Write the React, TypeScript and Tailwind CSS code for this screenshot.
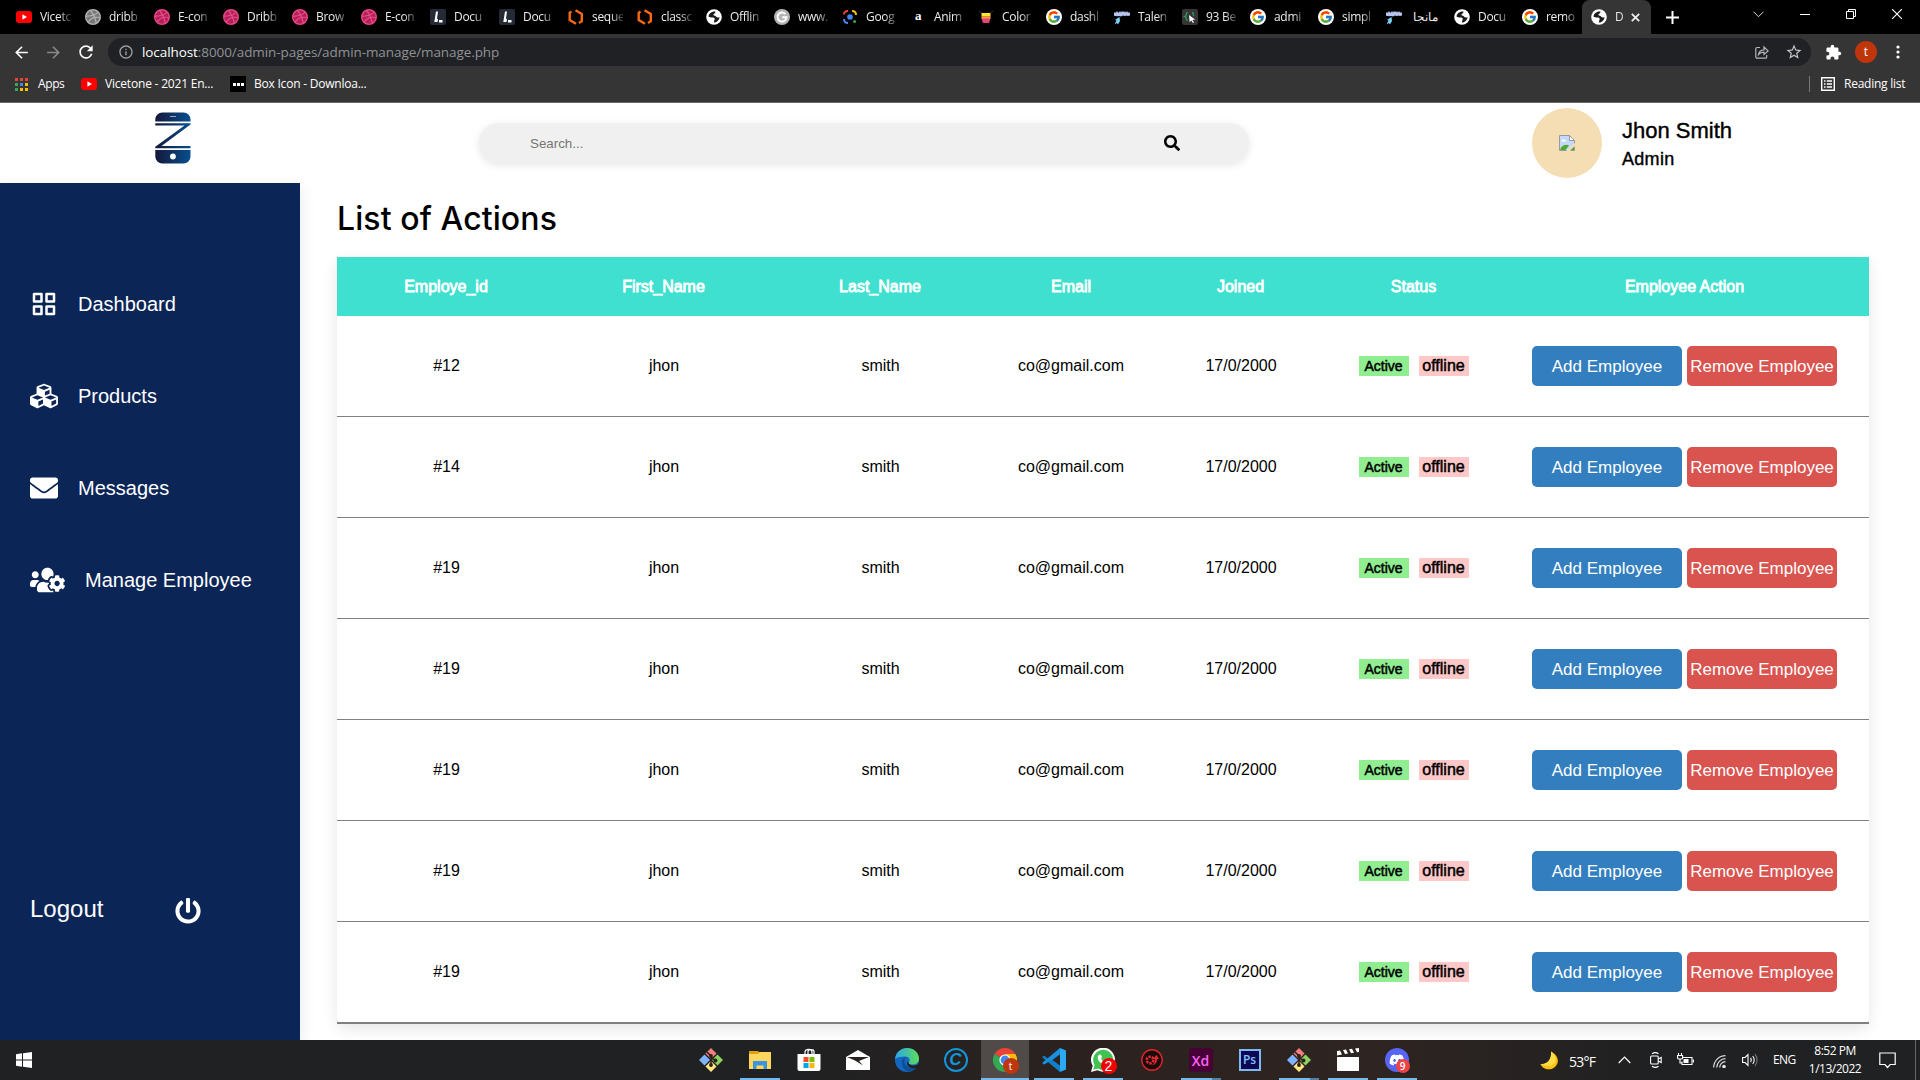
import React from "react";
import { FaCubes, FaEnvelope, FaUsersCog, FaPowerOff, FaSearch, FaDribbble, FaDiscord } from "react-icons/fa";
import { FcGoogle } from "react-icons/fc";
import { BiGridAlt } from "react-icons/bi";
import { MdArrowBack, MdArrowForward, MdRefresh, MdExtension, MdStarBorder, MdOutlineInfo } from "react-icons/md";

const UI = "font-['Open_Sans',sans-serif]";

function YouTube() {
  return (
    <svg width="16" height="16" viewBox="0 0 16 16" className="shrink-0">
      <rect y="2" width="16" height="12" rx="3" fill="#f00" />
      <path d="M6.4 5.3 11 8l-4.6 2.7z" fill="#fff" />
    </svg>
  );
}
function Dribbble({ gray }: { gray?: boolean }) {
  return (
    <span className={`flex size-4 shrink-0 items-center justify-center rounded-full ${gray ? "bg-[#777]" : "bg-[#b2215a]"}`}>
      <FaDribbble size={16} color={gray ? "#b5b5b5" : "#ea4c89"} />
    </span>
  );
}
function Lib() {
  return (
    <svg width="16" height="16" viewBox="0 0 16 16" className="shrink-0">
      <rect width="16" height="16" rx="2" fill="#252b36" />
      <path d="M6 2.500h2L7 9.500l1 1-.5 2.500H4.300zM9 11h3.500v2.500H9z" fill="#fff" />
    </svg>
  );
}
function Hex() {
  return (
    <svg width="16" height="16" viewBox="0 0 16 16" fill="none" stroke="#f9690e" strokeWidth="2.4" className="shrink-0">
      <path d="M3.500 2.500 1.700 3.800V11L8 14.800M7.500 1.200l6.300 3.800v7.200L11 14" />
    </svg>
  );
}
function Globe() {
  return (
    <svg width="16" height="16" viewBox="0 0 16 16" className="shrink-0">
      <circle cx="8" cy="8" r="7.800" fill="#fff" />
      <path d="M9.500 2.500C5.500 2 3 4.500 2.500 7.500c1.500 1.200 3 1 4.500 1 1.500.2 2 1.200 1.500 2.300L7.800 13.500c3 .2 5.700-2.500 5.700-5.500-1 .8-2.500.7-3.300-.3C9.500 6.500 8 7 7.500 6c-.4-1.200 2-1.200 2-3.500z" fill="#1c1c1c" />
      <path d="M3.500 9.500c0 2 1.500 3.300 2.500 3.700l.3-2z" fill="#fff" />
    </svg>
  );
}
function Google() {
  return (
    <span className="flex size-4 shrink-0 items-center justify-center rounded-full bg-white">
      <FcGoogle size={14} />
    </span>
  );
}
function GrayG() {
  return (
    <svg width="16" height="16" viewBox="0 0 16 16" className="shrink-0">
      <circle cx="8" cy="8" r="8" fill="#b3b3b3" />
      <path d="M11.300 5A4.500 4.500 0 1 0 12.500 8.300H8.300" fill="none" stroke="#fff" strokeWidth="2" />
    </svg>
  );
}
function Lens() {
  return (
    <svg width="16" height="16" viewBox="0 0 16 16" fill="none" strokeWidth="2" className="shrink-0">
      <path d="M2 5.500C2 3 3 2 6 2" stroke="#ea4335" />
      <path d="M10 2c3 0 4 1 4 4" stroke="#fbbc04" />
      <path d="M2 10c0 3 1 4 4 4" stroke="#4285f4" />
      <circle cx="8" cy="8" r="2.800" fill="#4285f4" />
      <circle cx="12.600" cy="12.600" r="1.500" fill="#34a853" />
    </svg>
  );
}
function LetterA() {
  return <span className="flex size-4 shrink-0 items-center justify-center pb-[3px] font-['Liberation_Serif',serif] text-[13px] leading-none font-bold text-white">a</span>;
}
function Shield() {
  return (
    <svg width="16" height="16" viewBox="0 0 16 16" className="shrink-0">
      <path d="M1 2l3 2M15 2l-3 2" stroke="#333" />
      <path d="M3.500 4h9v3.500h-9z" fill="#ffe52e" />
      <path d="M3.500 7.300h9V10h-9z" fill="#ff9c3b" />
      <path d="M3.500 9.500h9L11 14H5z" fill="#e0457b" />
    </svg>
  );
}
function Rocket() {
  return (
    <svg width="16" height="16" viewBox="0 0 16 16" className="shrink-0">
      <path d="M0 3.500h2l1-1.500 1 1.500h1L6 2l1 1.500L8 2l1 1 1.500-1v1.500L12 2.500l1 1 1-1.500v1.500h2v3l-2 .5-2-.5-1 .8-2-.8-2 1-2-.6-2 .4-3-.5z" fill="#b9c4ee" />
      <path d="M5.500 8 3 9.500 1 11l1.500.5-2 4 2.500-1.500 1 1.500L6 12z" fill="#7cd0f2" />
    </svg>
  );
}
function Braces() {
  return (
    <svg width="16" height="16" viewBox="0 0 16 16" className="shrink-0">
      <rect width="16" height="16" rx="2" fill="#363636" />
      <path d="M5.500 3.500c-2 0-.5 3.500-2.300 4 1.800.5.300 4 2.300 4M10 3.500c2 0 .8 2.500 1.800 3.500" stroke="#2f9e5b" strokeWidth="1.300" fill="none" />
      <path d="m7 6 6 4.500-2.500.4L12 13.500l-1.200.6-1.300-2.700L7.600 13z" fill="#fff" />
    </svg>
  );
}

const tabs: [React.ReactNode, string][] = [
  [<YouTube />, "Vicetc"], [<Dribbble gray />, "dribb"], [<Dribbble />, "E-con"], [<Dribbble />, "Dribb"],
  [<Dribbble />, "Brow"], [<Dribbble />, "E-con"], [<Lib />, "Docu"], [<Lib />, "Docu"],
  [<Hex />, "seque"], [<Hex />, "classc"], [<Globe />, "Offlin"], [<GrayG />, "www."],
  [<Lens />, "Goog"], [<LetterA />, "Anim"], [<Shield />, "Color"], [<Google />, "dashl"],
  [<Rocket />, "Talen"], [<Braces />, "93 Be"], [<Google />, "admi"], [<Google />, "simpl"],
  [<Rocket />, "مانجا"], [<Globe />, "Docu"], [<Google />, "remo"],
];

function TabStrip() {
  return (
    <div className={`flex h-[34px] items-stretch bg-black pl-[9px] text-[12px] tracking-[-0.3px] text-[#ececec] ${UI}`}>
      {tabs.map(([icon, label], i) => (
        <div key={i} className={`flex items-center gap-2 pl-[7px] ${i < 10 ? "w-[69px]" : i === 22 ? "w-[67px]" : "w-[68px]"} shrink-0`}>
          {icon}
          {i === 20 ? (
            <span className="w-[30px] shrink-0 pr-[2px] text-right text-[12px] tracking-normal whitespace-nowrap">{label}</span>
          ) : (
            <span className="w-[31px] shrink-0 [mask-image:linear-gradient(90deg,#000_60%,#0003)] whitespace-nowrap">{label}</span>
          )}
          <span className={`ml-auto h-5 w-px ${i < 22 ? "bg-[#5a5a5a]" : ""}`} />
        </div>
      ))}
      <div className="flex w-[69px] shrink-0 items-center rounded-t-[8px] bg-[#353535] pl-[9px]">
        <Globe />
        <span className="ml-2 w-4 [mask-image:linear-gradient(90deg,#000_20%,#0008)]">D</span>
        <svg width="9" height="9" viewBox="0 0 9 9" stroke="#eee" strokeWidth="1.800"><path d="M.8.8l7.400 7.400M8.200.8.8 8.200" /></svg>
      </div>
      <svg width="13" height="13" viewBox="0 0 13 13" stroke="#fff" strokeWidth="2" className="ml-[15px] self-center"><path d="M6.500 0v13M0 6.500h13" /></svg>
      <div className="ml-auto flex h-7 items-center pr-[18px]">
        <svg width="11" height="7" viewBox="0 0 11 7" fill="none" stroke="#ddd" className="mr-[36px]"><path d="M.5.7l5 5 5-5" /></svg>
        <svg width="10" height="10" viewBox="0 0 10 10" stroke="#fff" className="mr-[36px]"><path d="M0 5.500h10" /></svg>
        <svg width="10" height="10" viewBox="0 0 10 10" fill="none" stroke="#fff" className="mr-[36px]"><path d="M.5 2.500h7v7h-7zM2.500 2.500v-2h7v7h-2" /></svg>
        <svg width="10" height="10" viewBox="0 0 10 10" stroke="#fff" strokeWidth="1.100"><path d="M0 0l10 10M10 0 0 10" /></svg>
      </div>
    </div>
  );
}

function Toolbar() {
  return (
    <div className={`flex h-9 items-center bg-[#353535] pl-[12px] ${UI}`}>
      <MdArrowBack size={19} color="#fff" />
      <MdArrowForward size={19} color="#8a8a8a" className="ml-[13px]" />
      <MdRefresh size={20} color="#fff" className="ml-[13px]" />
      <div className="ml-[12px] flex h-7 w-[1703px] items-center rounded-full bg-[#202124] pr-[8px] pl-[10px]">
        <MdOutlineInfo size={16} color="#9aa0a6" />
        <span className="ml-2 text-[13.500px] tracking-[-0.08px] text-[#8f9296]">
          <span className="text-white">localhost</span>:8000/admin-pages/admin-manage/manage.php
        </span>
        <svg width="14" height="14" viewBox="0 0 14 14" fill="none" stroke="#b5b5b5" strokeWidth="1.200" className="mr-[16px] ml-auto">
          <path d="M5 2.500H2a1.200 1.200 0 0 0-1.200 1.200V12A1.200 1.200 0 0 0 2 13.200h8.500a1.200 1.200 0 0 0 1.200-1.200v-2" />
          <path d="M3.500 9.500C4 6.500 6 5 9 4.800V2l4.200 4L9 9.500V7.200C6.500 7.200 5 7.800 3.500 9.500z" />
        </svg>
        <MdStarBorder size={18} color="#c4c4c4" />
      </div>
      <MdExtension size={17} color="#fff" className="ml-[14px]" />
      <span className="ml-[13px] flex size-[22px] items-center justify-center rounded-full bg-[#bf360c] text-[12px] text-white">t</span>
      <svg width="4" height="14" viewBox="0 0 4 14" fill="#fff" className="ml-[19px]"><circle cx="2" cy="2" r="1.600" /><circle cx="2" cy="7" r="1.600" /><circle cx="2" cy="12" r="1.600" /></svg>
    </div>
  );
}

const appColors = ["#ea4335", "#ea4335", "#ea4335", "#34a853", "#4285f4", "#fbbc04", "#34a853", "#fbbc04", "#fbbc04"];

function Bookmarks() {
  return (
    <div className={`flex h-[33px] items-center border-b border-[#6a6a6a] bg-[#353535] pb-[4px] pl-[15px] text-[12px] text-white ${UI}`}>
      <span className="grid grid-cols-3 gap-[2px]">
        {appColors.map((c, i) => <span key={i} className="h-[3px] w-[3px]" style={{ background: c }} />)}
      </span>
      <span className="ml-[10px] w-[28px] tracking-[-0.4px]">Apps</span>
      <span className="ml-[15px]"><YouTube /></span>
      <span className="ml-2 w-[117px] tracking-[-0.2px] whitespace-nowrap">Vicetone - 2021 En...</span>
      <span className="ml-[8px] flex size-4 items-center justify-center gap-[1px] bg-black">
        <i className="size-[3px] bg-white" /><i className="size-[3px] bg-white" /><i className="size-[3px] bg-white" />
      </span>
      <span className="ml-2 tracking-[-0.22px]">Box Icon - Downloa...</span>
      <span className="ml-auto h-4 w-px bg-[#777]" />
      <svg width="14" height="14" viewBox="0 0 14 14" fill="none" stroke="#fff" strokeWidth="1.400" className="ml-[11px]">
        <path d="M.7.7h12.600v12.600H.7zM3 4h1.500M5.800 4H11M3 7h1.500M5.800 7H11M3 10h1.500M5.800 10H11" />
      </svg>
      <span className="mr-[14px] ml-[9px] w-[62px] tracking-[-0.25px] whitespace-nowrap">Reading list</span>
    </div>
  );
}

function Logo() {
  return (
    <svg width="36" height="52" viewBox="0 0 36 52" className="ml-[155px] shrink-0">
      <defs>
        <linearGradient id="logo" gradientUnits="userSpaceOnUse" x1="0" x2="36" y1="0" y2="0"><stop offset="0" stopColor="#15173a" /><stop offset="1" stopColor="#07508f" /></linearGradient>
      </defs>
      <path d="M.3 9.500V7.500A7 7 0 0 1 7.300.5h21.200a7 7 0 0 1 7 7v2z" fill="url(#logo)" />
      <path d="M.3 11.200h35.200v1.400L6.500 34h29v2.300H.3v-1.600L29.500 13.600H.3z" fill="url(#logo)" />
      <path d="M.3 38h35.200v6.500a7 7 0 0 1-7 7H7.300a7 7 0 0 1-7-7z" fill="url(#logo)" />
      <path d="M15 4.500h6" stroke="#8fa6c8" />
      <circle cx="17.900" cy="44.500" r="2.900" fill="#fff" />
    </svg>
  );
}

function BrokenImage() {
  return (
    <svg width="16" height="16" viewBox="0 0 16 16">
      <path d="M.5.5h10l5 5v10H.5z" fill="#c3d9f7" stroke="#9a9a9a" />
      <path d="M10.500.5v5h5z" fill="#fff" stroke="#9a9a9a" />
      <path d="M2.500 6c.3-2 3-2.200 3.500-.8 1.500-.2 1.800.8 1.700 1.300H2.500z" fill="#fff" />
      <path d="M1 15c1.500-5 6-6 9-4.500L6.500 15z" fill="#4ea832" />
      <path d="M7 16l9-8v3l-5 5z" fill="#f5deb3" />
      <path d="M11.500 15 15 12v3z" fill="#4ea832" />
    </svg>
  );
}

function Header() {
  return (
    <header className="flex h-20 items-center">
      <div className="flex w-[479px] pb-[10px]"><Logo /></div>
      <div className="flex h-10 w-[770px] items-center rounded-[20px] bg-[#f0f0f0] pl-[51px] shadow-[0_2px_8px_rgba(0,0,0,0.1)]">
        <span className="w-[634px] pt-px text-[13.333px] text-[#757575]">Search...</span>
        <FaSearch size={16} color="#000" />
      </div>
      <div className="ml-[283px] flex size-[70px] items-center justify-center rounded-full bg-[#f5deb3]"><BrokenImage /></div>
      <div className="ml-5 flex flex-col pt-[3px]">
        <span className="text-[22px] leading-[29px] [-webkit-text-stroke:0.4px_black]">Jhon Smith</span>
        <span className="pt-px text-[18px] leading-[27px] tracking-[0.3px] [-webkit-text-stroke:0.4px_black]">Admin</span>
      </div>
    </header>
  );
}

const nav = [
  { label: "Dashboard", icon: <BiGridAlt size={30} className="-mx-px" /> },
  { label: "Products", icon: <FaCubes size={28} /> },
  { label: "Messages", icon: <FaEnvelope size={28} /> },
  { label: "Manage Employee", icon: <FaUsersCog style={{ width: 35, height: 28 }} /> },
];

function Sidebar() {
  return (
    <aside className="flex w-[300px] shrink-0 flex-col bg-[#0b2557] pt-[75px] text-white shadow-[0_5px_15px_rgba(0,0,0,0.1)]">
      {nav.map((n) => (
        <div key={n.label} className="flex h-[92px] items-center gap-5 pl-[30px] text-[20px]">
          {n.icon}
          <span className="whitespace-nowrap">{n.label}</span>
        </div>
      ))}
      <div className="mt-[257px] flex h-[52px] items-center pl-[30px] text-[24px]">
        <span className="w-[145px]">Logout</span>
        <FaPowerOff size={26} className="mt-[4px]" />
      </div>
    </aside>
  );
}

const GRID = "grid grid-cols-[218px_217px_216px_166px_173px_173px_369px] items-center text-center";
const heads = ["Employe_id", "First_Name", "Last_Name", "Email", "Joined", "Status", "Employee Action"];
const ids = ["#12", "#14", "#19", "#19", "#19", "#19", "#19"];

function Table() {
  return (
    <div className="mt-[16px] w-[1532px] rounded-b-[8px] text-[16px] shadow-[0_5px_15px_rgba(0,0,0,0.1)]">
      <div className={`${GRID} h-[59px] bg-[#40e0d0] text-white`}>
        {heads.map((h) => <span key={h} className="pt-px [-webkit-text-stroke:0.8px_white]">{h}</span>)}
      </div>
      {ids.map((id, i) => (
        <div key={i} className={`${GRID} border-[#808080] ${i === 6 ? "h-[102px] border-b-2" : "h-[101px] border-b"}`}>
          <span className="pl-px">{id}</span>
          <span className="pl-px">jhon</span>
          <span className="pl-px">smith</span>
          <span>co@gmail.com</span>
          <span className="pl-px">17/0/2000</span>
          <span className="flex justify-center gap-[10px] [-webkit-text-stroke:0.5px_black]">
            <span className="h-5 w-[50px] bg-[#90ee90] text-[14px] leading-[20px]">Active</span>
            <span className="h-5 w-[50px] bg-[#ffc8c8] text-[16px] leading-5">offline</span>
          </span>
          <span className="flex justify-center gap-[5px] text-[17px] leading-[42px] text-white">
            <span className="h-10 w-[150px] rounded-[5px] bg-[#337ebe]">Add Employee</span>
            <span className="h-10 w-[150px] rounded-[5px] bg-[#d9534f]">Remove Employee</span>
          </span>
        </div>
      ))}
    </div>
  );
}

function GitIcon() {
  return (
    <svg width="24" height="24" viewBox="0 0 24 24">
      <path d="M12 0l5.500 5.500L12 11 6.500 5.500z" fill="#f08080" />
      <path d="M5.500 6.500 11 12l-5.500 5.500L0 12z" fill="#80b3ff" />
      <path d="M18.500 6.500 24 12l-5.500 5.500L13 12z" fill="#8dd35f" />
      <path d="M12 13l5.500 5.500L12 24l-5.500-5.500z" fill="#ffe680" />
      <path d="M8 4l4 4v9M12 9l4.500 4" stroke="#2b1f1c" strokeWidth="1.500" fill="none" />
      <circle cx="12" cy="8" r="1.900" fill="#2b1f1c" /><circle cx="12" cy="17" r="1.900" fill="#2b1f1c" /><circle cx="16.500" cy="12.500" r="1.900" fill="#2b1f1c" />
    </svg>
  );
}
function Explorer() {
  return (
    <svg width="22" height="18" viewBox="0 0 22 18">
      <path d="M0 0h9l1 1h12v17H0z" fill="#e0a010" />
      <path d="M0 3h9l2-2h11v17H0z" fill="#ffd75e" />
      <path d="M4 18v-8h14v8h-3.500v-3.500h-7V18z" fill="#3a95de" />
    </svg>
  );
}
function Store() {
  return (
    <svg width="24" height="24" viewBox="0 0 24 24">
      <path d="M8 7V4c0-3.500 7-3.500 7 0v3M11 7V3.500c0-2.500 6-2.500 6 0V7" fill="none" stroke="#fff" strokeWidth="1.200" />
      <path d="M.5 6h23v15a2 2 0 0 1-2 2h-19a2 2 0 0 1-2-2z" fill="#fff" />
      <path d="M6.500 9h5v5h-5z" fill="#f25022" /><path d="M12.500 9h5v5h-5z" fill="#7fba00" />
      <path d="M6.500 15h5v5h-5z" fill="#00a4ef" /><path d="M12.500 15h5v5h-5z" fill="#ffb900" />
    </svg>
  );
}
function Mail() {
  return (
    <svg width="24" height="20" viewBox="0 0 24 20">
      <path d="M0 7 12 0l12 7v13H0z" fill="#fff" />
      <path d="M1 7h22l-10 4 4 4.500-8-5z" fill="#28201f" />
    </svg>
  );
}
function Edge() {
  return (
    <svg width="24" height="24" viewBox="0 0 24 24">
      <defs><linearGradient id="edge" x1="0" x2="1"><stop offset="0" stopColor="#2aa7e8" /><stop offset="1" stopColor="#5fdc5a" /></linearGradient></defs>
      <circle cx="12" cy="12" r="12" fill="#1268c0" />
      <path d="M0 11C1 4 6 0 12 0c7 0 12 5 12 10.500 0 4-3 6-6.500 6-3 0-4.500-1-3.500-2.500 1.500-2 .5-5.500-4-5.500C5 8.500 1.500 9.500 0 11z" fill="url(#edge)" />
      <path d="M10 9c-5 3-4 11 2 14 4 1 8-.5 10-4-4 2-11 1-12.500-4C9 13 9.500 10.500 11 9.500z" fill="#0d4f95" />
      <path d="M13.500 14c-.5 2 2 3.600 5 3.400 2.500 0 4-.6 5-1.600l1 1-1.500 2.700c-4 2-11 .5-11-4.500 0-.8.700-1.300 1.500-1z" fill="#27211f" />
    </svg>
  );
}
function CIcon() {
  return (
    <span className="flex size-6 items-center justify-center rounded-full border-2 border-[#1296db] font-['Liberation_Sans',sans-serif] text-[17px] font-bold text-[#1296db] italic">C</span>
  );
}
function Chrome() {
  return (
    <span className="relative">
      <svg width="24" height="24" viewBox="0 0 24 24">
        <path d="M1.600 6A12 12 0 0 1 22.400 6L12 12z" fill="#ea4335" />
        <path d="M22.400 6A12 12 0 0 1 12 24V12z" fill="#fbbc04" />
        <path d="M1.600 6A12 12 0 0 0 12 24l3-8-3-4z" fill="#34a853" />
        <path d="M12 6h10.400l-5 8z" fill="#fbbc04" />
        <circle cx="12" cy="12" r="5.600" fill="#fff" /><circle cx="12" cy="12" r="4.400" fill="#4285f4" />
      </svg>
      <span className="absolute top-[10px] left-[10px] flex size-4 items-center justify-center rounded-full bg-[#bf360c] text-[10px] leading-none text-white">t</span>
    </span>
  );
}
function VsCode() {
  return (
    <svg width="24" height="24" viewBox="0 0 24 24">
      <path d="M18 0 6.500 11 2.300 7.700.5 8.500v1L18 24z" fill="#0f7fc9" />
      <path d="M18 6.500 2.300 16.500.5 15.600v-1L18 0z" fill="#1a8fdc" />
      <path d="M18 0l6 2.500v19L18 24z" fill="#2ba9f5" />
      <path d="M18 6.500v11L10.500 12z" fill="#29221f" />
    </svg>
  );
}
function WhatsApp() {
  return (
    <span className="relative">
      <svg width="24" height="24" viewBox="0 0 24 24">
        <path d="M0 24l1.700-6.200A12 12 0 1 1 6.500 22.300z" fill="#fff" />
        <path d="M2.300 21.700l1.300-4.700A10 10 0 1 1 7 20.400z" fill="#3fc351" />
        <path d="M8.500 6.500 10 6.700l1 2.500-1 1.300c.8 1.500 1.800 2.500 3.500 3.300l1.200-1.300 2.300 1.200c.3 2-1.500 3.300-3.300 3-3.700-.5-6.900-3.700-7-7.200.1-1.500.8-2.700 1.800-3z" fill="#fff" />
      </svg>
      <span className="absolute top-[10px] left-[10px] flex size-4 items-center justify-center rounded-full bg-[#f50000] font-['Liberation_Sans',sans-serif] text-[14px] leading-none text-white">2</span>
    </span>
  );
}
function RedGear() {
  return (
    <svg width="22" height="22" viewBox="0 0 22 22">
      <circle cx="11" cy="11" r="10.200" fill="#180c0c" stroke="#e0242b" strokeWidth="1.400" />
      <circle cx="9" cy="11" r="3.300" fill="none" stroke="#e8262d" strokeWidth="2.600" strokeDasharray="2.400 1" />
      <path d="M10 16c3 0 4-3 4-6h-2l3.500-4L18 10h-2c0 4-2 6-6 6z" fill="#e8262d" />
    </svg>
  );
}
function Clapper() {
  return (
    <svg width="24" height="24" viewBox="0 0 24 24" fill="#fff">
      <path d="M1 9h22v14H1z" /><path d="M1 3l3-.5 2 4L1 7.500zM7 2l3-.5 2 4-3 .5zM13 1.200l3-.5 2 4-3 .5zM19 .5l4-.5v4l-2 .3z" />
    </svg>
  );
}
function Discord() {
  return (
    <span className="relative flex size-6 items-center justify-center rounded-full bg-[#5865f2]">
      <FaDiscord size={16} color="#fff" />
      <span className="absolute top-[11px] left-[11px] flex size-[14px] items-center justify-center rounded-full bg-[#ed4245] text-[10px] leading-none font-semibold text-white">9</span>
    </span>
  );
}
const Xd = () => <span className="flex size-6 items-center justify-center rounded-[4px] bg-[#470137] text-[14px] font-semibold text-[#ff61f6]">Xd</span>;
const Ps = () => <span className="flex size-[22px] items-center justify-center border-2 border-[#80b9f0] bg-[#0c0853] text-[12px] font-semibold text-[#80c2ff]">Ps</span>;

const apps: { icon: React.ReactNode; line?: string; split?: boolean; active?: boolean }[] = [
  { icon: <GitIcon /> }, { icon: <Explorer />, line: "w-10" }, { icon: <Store /> }, { icon: <Mail /> }, { icon: <Edge /> }, { icon: <CIcon /> },
  { icon: <Chrome />, line: "w-12", active: true }, { icon: <VsCode />, line: "w-10" }, { icon: <WhatsApp />, line: "w-10" }, { icon: <RedGear /> },
  { icon: <Xd />, line: "w-10", split: true }, { icon: <Ps /> }, { icon: <GitIcon />, line: "w-10", split: true }, { icon: <Clapper />, line: "w-10" }, { icon: <Discord />, line: "w-10" },
];

function Taskbar() {
  return (
    <footer className={`flex h-10 shrink-0 bg-[linear-gradient(90deg,#1f2123_0%,#1f2123_40%,#2b2220_55%,#2e2421_72%,#202122_86%,#1f2123_100%)] text-white ${UI}`}>
      <svg width="16" height="16" viewBox="0 0 16 16" fill="#fff" className="mt-3 ml-4">
        <path d="M0 2.200 6 1.300v6.200H0zM7 1.200 16 0v7.500H7zM0 8.500h6v6.200l-6-.9zM7 8.500h9V16l-9-1.200z" />
      </svg>
      <div className="ml-[654px] flex">
        {apps.map((a, i) => (
          <div key={i} className="flex w-[49px] flex-col items-center">
            <div className={`flex h-[38px] w-12 items-center justify-center pt-[2px] ${a.active ? "bg-[#504a49]" : ""}`}>{a.icon}</div>
            {a.line && <div className={`flex h-[2px] justify-end bg-[#76b9ed] ${a.line}`}>{a.split && <span className="w-[9px] bg-[#56809f]" />}</div>}
          </div>
        ))}
      </div>
      <div className="ml-auto flex items-center">
        <svg width="19" height="19" viewBox="0 0 19 19" className="mr-[10px]">
          <path d="M11 .5c8 4 9 12 3 16.300C9 20 2.500 18 .5 13 7 14 12 8 11 .5z" fill="#ffc20e" />
          <path d="M11 .5c5 4 6 9 3 12s-8 3-13.500.5C7 14 12 8 11 .5z" fill="#ffdc4a" />
        </svg>
        <span className="w-[29px] pt-[2px] text-[14px] tracking-[-0.75px] whitespace-nowrap">53°F</span>
        <svg width="13" height="8" viewBox="0 0 13 8" fill="none" stroke="#fff" strokeWidth="1.200" className="ml-[20px]"><path d="M.7 7l5.800-6 5.800 6" /></svg>
        <svg width="12" height="16" viewBox="0 0 12 16" fill="none" stroke="#fff" strokeWidth="1.100" className="ml-[19px]">
          <rect x=".6" y="4" width="7.600" height="8" rx="1" /><path d="M8.200 7l3-1.500v5L8.200 9M2 1.800C4 .3 6.500.3 8.500 1.800M2 14.200c2 1.500 4.500 1.500 6.500 0" />
        </svg>
        <svg width="17" height="14" viewBox="0 0 17 14" fill="none" stroke="#fff" strokeWidth="1.100" className="ml-[15px]">
          <path d="M6 4.500h9v7H5v-3M16.400 6.500v3M1.500 0v2.500M4.500 0v2.500M.6 2.500h5v2.500c0 1.500-5 1.500-5 0zM3 6.500V10h1.500" /><path d="M6.500 6h5v4h-5z" fill="#fff" stroke="none" />
        </svg>
        <svg width="13" height="13" viewBox="0 0 13 13" fill="none" stroke="#ddd" strokeWidth="1.200" className="mt-[2px] ml-[19px]">
          <path d="M.7 12.500C.7 6 6 .7 12.500.7M3.700 12.500c0-4.800 4-8.800 8.800-8.800M6.700 12.500c0-3.200 2.600-5.800 5.800-5.800" /><circle cx="11" cy="11.500" r="1.200" fill="#fff" />
        </svg>
        <svg width="16" height="14" viewBox="0 0 16 14" fill="none" stroke="#fff" strokeWidth="1.100" className="ml-[16px]">
          <path d="M.6 4.500h2.500L6 1.500v11l-2.900-3H.6zM8.500 5c1 1 1 3 0 4M10.700 3c2 2.200 2 5.800 0 8" /><path d="M13 1.200c2.800 3.300 2.800 8.300 0 11.600" stroke="#777" />
        </svg>
        <span className="ml-[15px] w-[25px] text-[12px] tracking-[-0.6px]">ENG</span>
        <div className="ml-[10px] flex w-[54px] flex-col items-center text-[12px] leading-[18px] tracking-[-0.5px] whitespace-nowrap">
          <span>8:52 PM</span>
          <span>1/13/2022</span>
        </div>
        <svg width="17" height="17" viewBox="0 0 17 17" fill="none" stroke="#fff" strokeWidth="1.200" className="ml-[17px]"><path d="M.8 1h15.400v11.500h-5L8.500 15.500 6 12.500H.8z" /></svg>
        <span className="mr-1 ml-[19px] h-10 w-px bg-[#666]" />
      </div>
    </footer>
  );
}

export default function App() {
  return (
    <div className="flex h-[1080px] w-[1920px] flex-col overflow-hidden bg-white font-['Liberation_Sans',Arial,sans-serif] text-black">
      <TabStrip />
      <Toolbar />
      <Bookmarks />
      <Header />
      <div className="flex min-h-0 flex-1">
        <Sidebar />
        <main className="pt-[13px] pl-[37px]">
          <h1 className="font-['Inter',sans-serif] text-[32px] leading-[45px] font-medium tracking-[0.1px]">List of Actions</h1>
          <Table />
        </main>
      </div>
      <Taskbar />
    </div>
  );
}
